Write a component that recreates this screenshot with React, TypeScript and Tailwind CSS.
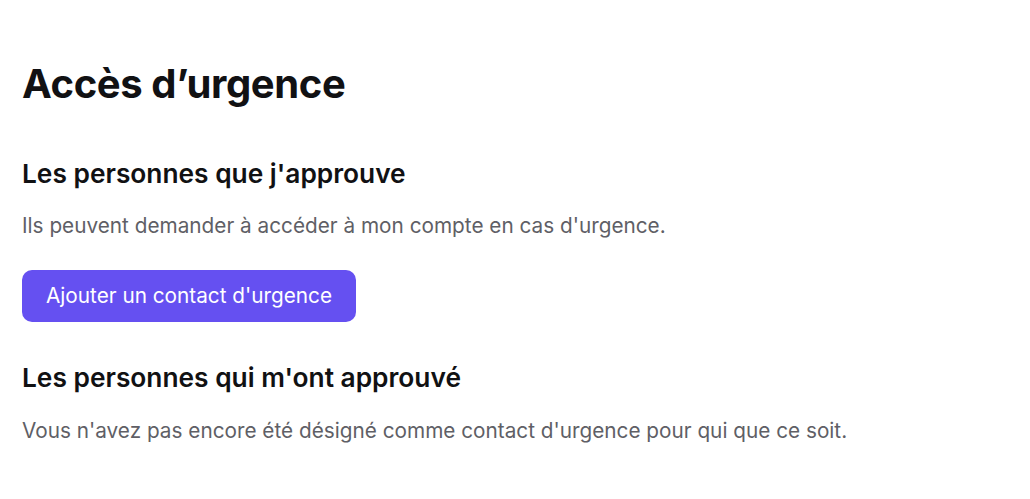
import React from 'react';

export default function App() {
  return (
    <div className="min-h-screen bg-white px-[22px] pt-[58px] text-[#111113]" style={{ fontFamily: 'Inter, "Noto Sans", sans-serif' }}>
      <h1 className="text-[40px] font-bold leading-[52px] tracking-[-0.01em]">Accès d’urgence</h1>

      {/* Personnes approuvées */}
      <section className="mt-[47px]">
        <h2 className="text-[26.3px] font-semibold leading-[34px]">Les personnes que j'approuve</h2>
        <p className="mt-[21px] text-[20.75px] leading-[28px] text-[#5f5f66]">
          Ils peuvent demander à accéder à mon compte en cas d'urgence.
        </p>
        <button className="mt-[30px] h-[52px] rounded-[10px] bg-[#6550f1] px-[24px] text-[20.75px] text-white">
          Ajouter un contact d'urgence
        </button>
      </section>

      {/* Personnes qui m'ont approuvé */}
      <section className="mt-[39px]">
        <h2 className="text-[26.3px] font-semibold leading-[34px]">Les personnes qui m'ont approuvé</h2>
        <p className="mt-[22px] text-[20.75px] leading-[28px] text-[#5f5f66]">
          Vous n'avez pas encore été désigné comme contact d'urgence pour qui que ce soit.
        </p>
      </section>
    </div>
  );
}
